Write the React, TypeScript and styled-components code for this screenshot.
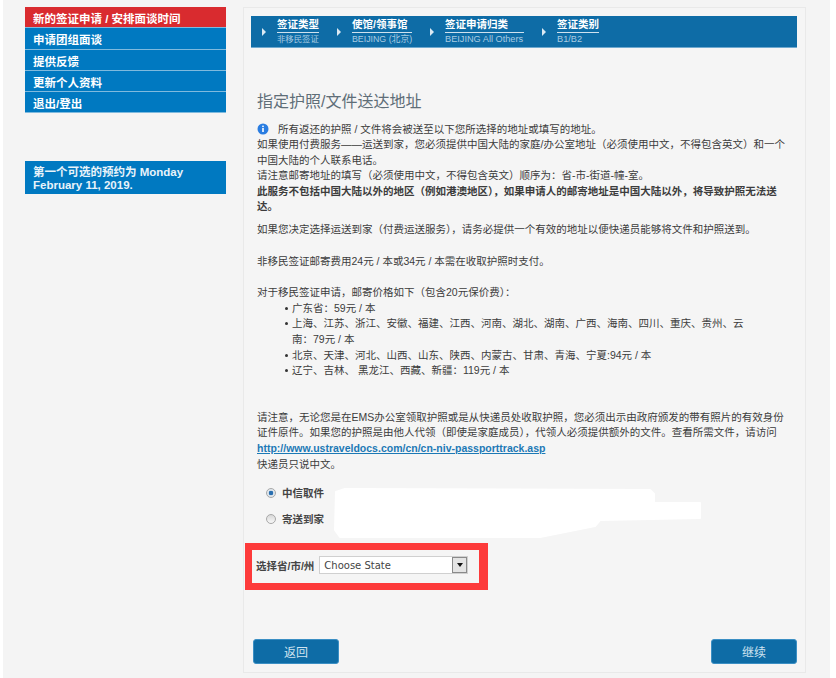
import React from "react";
import styled, { createGlobalStyle } from "styled-components";

const Global = createGlobalStyle`
  html, body { margin: 0; padding: 0; background: #fff; }
  body { width: 836px; height: 678px; overflow: hidden; font-family: "Liberation Sans", "Noto Sans CJK SC", sans-serif; }
`;

const Page = styled.div`
  box-sizing: border-box;
  width: 827px;
  height: 678px;
  margin-left: 3px;
  background: #f4f4f4;
  padding: 7px 0 0 22px;
  display: flex;
  align-items: flex-start;
  gap: 17px;
`;

const Sidebar = styled.aside`
  width: 201px;
  display: flex;
  flex-direction: column;
`;

const Nav = styled.nav`
  display: flex;
  flex-direction: column;
  margin-bottom: 47.5px;
`;

const NavItem = styled.a<{ $active?: boolean }>`
  box-sizing: border-box;
  height: 21.3px;
  line-height: 24px;
  padding-left: 8px;
  font-size: 11.5px;
  font-weight: bold;
  color: #fff;
  overflow: hidden;
  background: ${(p) => (p.$active ? "#d92b2f" : "#0079c1")};
  border-bottom: 1px solid #7fbade;
`;

const Notice = styled.div`
  box-sizing: border-box;
  height: 33px;
  padding: 5px 8px 0;
  font-size: 11.5px;
  line-height: 13px;
  font-weight: bold;
  color: #e8f3fa;
  background: #0079c1;
`;

const Panel = styled.main`
  position: relative;
  box-sizing: border-box;
  width: 563px;
  height: 666px;
  padding: 8px 8px 0 7px;
  background: #f5f5f5;
  border: 1px solid #e9e9e9;
  display: flex;
  flex-direction: column;
`;

const Steps = styled.div`
  box-sizing: border-box;
  height: 32px;
  background: #0e6ca6;
  border-bottom: 1px solid #6fa9cf;
  display: flex;
  align-items: flex-start;
  padding: 1px 0 0 11px;
  color: #fff;
`;

const Arrow = styled.svg`
  width: 4px;
  height: 8px;
  margin-top: 11px;
  flex: none;
`;

const Step = styled.div<{ $w: number }>`
  width: ${(p) => p.$w}px;
  margin: 0 18px 0 11px;
  flex: none;
`;

const StepTitle = styled.div`
  font-size: 10.5px;
  line-height: 14px;
  height: 15px;
  font-weight: bold;
  border-bottom: 1px solid #cfe2ef;
  white-space: nowrap;
`;

const StepValue = styled.div<{ $size: number }>`
  font-size: ${(p) => p.$size}px;
  line-height: 11px;
  margin-top: 1px;
  color: #a8cbe2;
  white-space: nowrap;
`;

const Heading = styled.h1`
  margin: 44px 0 0 6px;
  font-size: 16px;
  line-height: 20px;
  font-weight: normal;
  color: #5f6e78;
`;

const Body = styled.div`
  margin: 9.5px 0 0 6px;
  width: 530px;
  font-size: 10.5px;
  line-height: 15.6px;
  color: #3c3c3c;
`;

const Para = styled.p<{ $top?: number }>`
  margin: ${(p) => p.$top ?? 0}px 0 0;
`;

const Info = styled.svg`
  width: 12px;
  height: 12px;
  vertical-align: -2px;
  margin: 0 9px 0 0;
`;

const Bullets = styled.ul`
  margin: 0;
  padding: 0 40px 0 28px;
  list-style: none;
`;

const Bullet = styled.li`
  padding-left: 7px;
  text-indent: -7px;
  &::before {
    content: "";
    display: inline-block;
    width: 3px;
    height: 3px;
    margin-right: 4px;
    border-radius: 50%;
    background: #333;
    vertical-align: 2px;
  }
`;

const Link = styled.a`
  color: #1c79b5;
  font-size: 10.5px;
  font-weight: bold;
  text-decoration: underline;
`;

const RadioRow = styled.label<{ $top: number }>`
  display: flex;
  align-items: center;
  margin: ${(p) => p.$top}px 0 0 15px;
  gap: 6px;
  font-size: 10.5px;
  line-height: 14px;
  font-weight: bold;
  color: #444;
`;

const RadioDot = styled.span<{ $on?: boolean }>`
  box-sizing: border-box;
  width: 10px;
  height: 10px;
  border-radius: 50%;
  border: 1px solid #a8a8a8;
  background: ${(p) => (p.$on ? "radial-gradient(circle, #2a6fb0 0 2px, #dfe6ec 2.6px)" : "linear-gradient(#d8d8d8, #f8f8f8)")};
`;

const Redaction = styled.svg`
  position: absolute;
  left: 90px;
  top: 480px;
  width: 368px;
  height: 52px;
`;

const Highlight = styled.div`
  box-sizing: border-box;
  width: 243px;
  height: 47px;
  margin: 17px 0 0 -6px;
  border: 7px solid #fd3a3a;
  border-right-width: 9px;
  display: flex;
  align-items: center;
  padding: 0 0 3px 4px;
  gap: 5px;
  font-size: 10.5px;
  font-weight: bold;
  color: #444;
`;

const SelectBox = styled.div`
  box-sizing: border-box;
  width: 149px;
  height: 18px;
  background: #fff;
  border: 1px solid #d0d0d0;
  display: flex;
  align-items: center;
  justify-content: space-between;
  padding-left: 4px;
  font-family: "DejaVu Sans", sans-serif;
  font-size: 10px;
  font-weight: normal;
  color: #444;
`;

const SelectArrow = styled.span`
  box-sizing: border-box;
  width: 15px;
  height: 16px;
  background: #e4e4e4;
  border: 1px solid #8a8a8a;
  display: flex;
  align-items: center;
  justify-content: center;
  &::after {
    content: "";
    border: 3px solid transparent;
    border-top: 4px solid #111;
    border-bottom: 0;
  }
`;

const Footer = styled.div`
  margin-top: auto;
  margin-bottom: 8px;
  display: flex;
  justify-content: space-between;
  padding: 0 0 0 2px;
`;

const Button = styled.button`
  box-sizing: border-box;
  width: 86px;
  height: 25px;
  border: 1px solid #3b8fc4;
  border-radius: 3px;
  background: #0e6ca6;
  color: #cfe3f0;
  font-family: inherit;
  font-size: 12px;
  padding: 0;
`;

const arrow = (
  <Arrow viewBox="0 0 4 8">
    <path d="M0 0L4 4L0 8Z" fill="#dbe9f3" />
  </Arrow>
);

export default function App() {
  return (
    <Page>
      <Global />
      <Sidebar>
        <Nav>
          <NavItem $active>新的签证申请 / 安排面谈时间</NavItem>
          <NavItem>申请团组面谈</NavItem>
          <NavItem>提供反馈</NavItem>
          <NavItem>更新个人资料</NavItem>
          <NavItem>退出/登出</NavItem>
        </Nav>
        <Notice>第一个可选的预约为 Monday February 11, 2019.</Notice>
      </Sidebar>
      <Panel>
        <Steps>
          {arrow}
          <Step $w={42}>
            <StepTitle>签证类型</StepTitle>
            <StepValue $size={8.4}>非移民签证</StepValue>
          </Step>
          {arrow}
          <Step $w={60}>
            <StepTitle>使馆/领事馆</StepTitle>
            <StepValue $size={8.8}>BEIJING (北京)</StepValue>
          </Step>
          {arrow}
          <Step $w={79}>
            <StepTitle>签证申请归类</StepTitle>
            <StepValue $size={9.2}>BEIJING All Others</StepValue>
          </Step>
          {arrow}
          <Step $w={42}>
            <StepTitle>签证类别</StepTitle>
            <StepValue $size={9.2}>B1/B2</StepValue>
          </Step>
        </Steps>
        <Heading>指定护照/文件送达地址</Heading>
        <Body>
          <Para>
            <Info viewBox="0 0 12 12">
              <circle cx="6" cy="6" r="5.5" fill="#2a7de1" />
              <rect x="5.2" y="5" width="1.6" height="4" fill="#fff" />
              <rect x="5.2" y="2.6" width="1.6" height="1.5" fill="#fff" />
            </Info>
            所有返还的护照 / 文件将会被送至以下您所选择的地址或填写的地址。
          </Para>
          <Para>如果使用付费服务——运送到家，您必须提供中国大陆的家庭/办公室地址（必须使用中文，不得包含英文）和一个中国大陆的个人联系电话。</Para>
          <Para>请注意邮寄地址的填写（必须使用中文，不得包含英文）顺序为：省-市-街道-幢-室。</Para>
          <Para><b>此服务不包括中国大陆以外的地区（例如港澳地区），如果申请人的邮寄地址是中国大陆以外，将导致护照无法送达。</b></Para>
          <Para $top={7}>如果您决定选择运送到家（付费运送服务），请务必提供一个有效的地址以便快递员能够将文件和护照送到。</Para>
          <Para $top={16}>非移民签证邮寄费用24元 / 本或34元 / 本需在收取护照时支付。</Para>
          <Para $top={16}>对于移民签证申请，邮寄价格如下（包含20元保价费）：</Para>
          <Bullets>
            <Bullet>广东省：59元 / 本</Bullet>
            <Bullet>上海、江苏、浙江、安徽、福建、江西、河南、湖北、湖南、广西、海南、四川、重庆、贵州、云南：79元 / 本</Bullet>
            <Bullet>北京、天津、河北、山西、山东、陕西、内蒙古、甘肃、青海、宁夏:94元 / 本</Bullet>
            <Bullet>辽宁、吉林、 黑龙江、西藏、新疆：119元 / 本</Bullet>
          </Bullets>
          <Para $top={31}>请注意，无论您是在EMS办公室领取护照或是从快递员处收取护照，您必须出示由政府颁发的带有照片的有效身份证件原件。如果您的护照是由他人代领（即使是家庭成员），代领人必须提供额外的文件。查看所需文件，请访问</Para>
          <Para><Link>http://www.ustraveldocs.com/cn/cn-niv-passporttrack.asp</Link></Para>
          <Para>快递员只说中文。</Para>
        </Body>
        <RadioRow $top={14}><RadioDot $on />中信取件</RadioRow>
        <RadioRow $top={12}><RadioDot />寄送到家</RadioRow>
        <Redaction viewBox="0 0 368 52">
          <path d="M2 4L11 1L316 2L320 6L320 15L366 15L366 30L266 32L261 38L241 42L206 49L6 49L1 42Z" fill="#fff" stroke="#fff" strokeWidth="2" strokeLinejoin="round" />
        </Redaction>
        <Highlight>
          选择省/市/州
          <SelectBox>Choose State<SelectArrow /></SelectBox>
        </Highlight>
        <Footer>
          <Button>返回</Button>
          <Button>继续</Button>
        </Footer>
      </Panel>
    </Page>
  );
}
